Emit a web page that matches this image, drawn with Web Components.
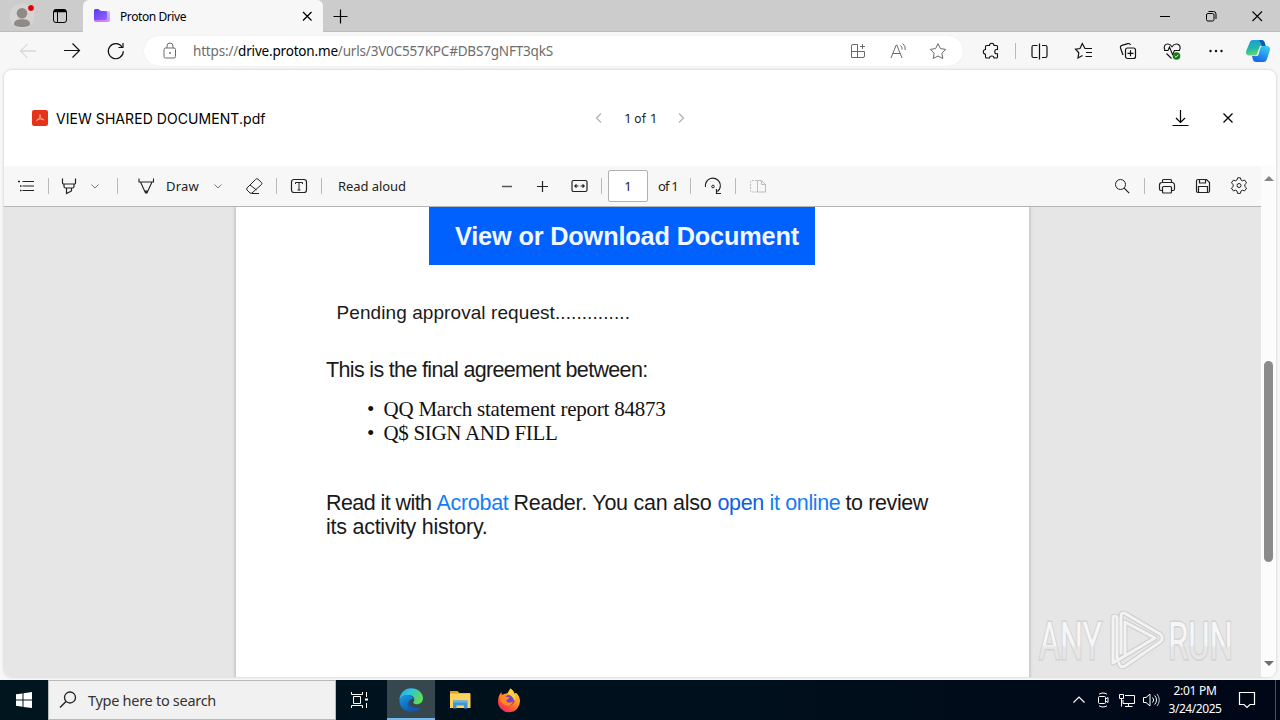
<!DOCTYPE html>
<html lang="en">
<head>
<meta charset="utf-8">
<title>Proton Drive</title>
<style>
  html, body {
    margin: 0;
    height: 100%;
    overflow: hidden;
  }
  body {
    display: flex;
    flex-direction: column;
    width: 1280px;
    height: 720px;
    background: #f7f7f7;
    color: #1b1b1b;
    font-family: "Noto Sans", "Open Sans", sans-serif;
    font-size: 12px;
  }
</style>
</head>
<body>
<tab-strip>Proton Drive</tab-strip>
<nav-bar></nav-bar>
<page-frame>
  <drive-header slot="header">VIEW SHARED DOCUMENT.pdf</drive-header>
  <pdf-toolbar slot="toolbar"></pdf-toolbar>
  <pdf-document></pdf-document>
</page-frame>
<win-taskbar></win-taskbar>

<script>
(function () {
  'use strict';

  // name -> [size, markup]
  const ICONS = {
    avatar: [28, `<g stroke="none"><circle cx="14" cy="14" r="12.500" fill="#d6d3d1"/><circle cx="14" cy="11.300" r="5.300" fill="#8e8a87"/><path d="M6 22c0-3.300 3.500-4.700 8-4.700s8 1.400 8 4.700c0 1.800-3.500 3-8 3s-8-1.200-8-3z" fill="#8e8a87"/></g><circle cx="23" cy="6" r="3.500" fill="#d4000c" stroke="#e7dcdc"/>`],
    workspaces: [20, `<rect x="3.500" y="3.500" width="13" height="13" rx="2.500"/><path d="M4 5h12" stroke-width="2.500"/><path d="M7.500 6v10.500"/>`],
    proton: [18, `<defs><linearGradient id="a" x1="0" y1="0" x2="1" y2="1"><stop offset="0" stop-color="#5b3bee"/><stop offset="1" stop-color="#9463ff"/></linearGradient><linearGradient id="b" x1="0" y1="1" x2="1" y2="0"><stop offset="0" stop-color="#d26bff"/><stop offset="1" stop-color="#c9b4ff"/></linearGradient></defs><g stroke="none"><path d="M1 5a2 2 0 0 1 2-2h3.500l2 1H15a2 2 0 0 1 2 2v7a2 2 0 0 1-2 2H3a2 2 0 0 1-2-2z" fill="url(#b)"/><path d="M1 3.500A1.500 1.500 0 0 1 2.500 2H5.500l2 2H12.500a1.500 1.500 0 0 1 1.500 1.500v5c0 2-1 2.500-3 2.500H1z" fill="url(#a)"/></g>`],
    tabClose: [18, `<path d="M5 5l8.500 8.500M13.500 5L5 13.500" stroke-width="1.300"/>`],
    plus: [16, `<path d="M8.500 1.500v14M1.500 8.500h14" stroke-width="1.200"/>`],
    minimize: [16, `<path d="M3 8.500h10"/>`],
    restore: [16, `<rect x="3.500" y="5.500" width="7.500" height="7.500" rx="1.500"/><path d="M5.500 3.500H10.500a2.500 2.500 0 0 1 2.500 2.500V11"/>`],
    close: [16, `<path d="M3.500 3.500l9.500 9.500M13 3.500L3.500 13" stroke-width="1.100"/>`],
    back: [20, `<path d="M18 10H2.500M9.500 3l-7 7 7 7" stroke="#c9c9c9"/>`],
    forward: [20, `<path d="M2 9.500h15.500M10.500 2.500l7 7-7 7" stroke-width="1.200"/>`],
    refresh: [20, `<path d="M16 6a7.500 7.500 0 1 0 1.300 4.300" stroke-width="1.200"/><path d="M17 2v4.500h-4.500" stroke-width="1.200"/>`],
    lock: [20, `<g stroke="#6a6a6a"><rect x="4" y="7" width="11.500" height="10" rx="1.500"/><path d="M7 7V5a3 3 0 0 1 6 0v2"/><circle cx="10" cy="12" r=".6"/></g>`],
    apps: [20, `<g stroke="#6a6a6a"><path d="M9.500 3.500h-4.500a1.500 1.500 0 0 0-1.500 1.500v11.500h11.500a1.500 1.500 0 0 0 1.500-1.500v-4.500h-13M9.500 3.500v13M14.500 3v5M12 5.500h5"/></g>`],
    read: [20, `<g stroke="#6a6a6a"><path d="M3 17L8.200 4h.6L14 17M4.700 12.500h7.600M12.500 4.500a4 4 0 0 1 1.500 4M14.700 2.500a7 7 0 0 1 2.500 6.500"/></g>`],
    star: [20, `<path d="M10 2.700l2.400 4.900 5.300.8-3.800 3.800.9 5.300-4.800-2.500-4.800 2.500.9-5.300-3.800-3.800 5.300-.8z" stroke="#6a6a6a"/>`],
    puzzle: [20, `<path d="M5.500 4.500h3c0-3 4.500-3 4.500 0h2.500a1 1 0 0 1 1 1v3h-1c-2.300 0-2.300 4.300 0 4.300h1v3.200a1 1 0 0 1-1 1H13c0-2.700-4.500-2.700-4.500 0h-3a1 1 0 0 1-1-1v-2.800c-2.900 0-2.900-4.700 0-4.700v-3a1 1 0 0 1 1-1z" stroke-width="1.100"/>`],
    split: [20, `<path d="M7.500 4.500H3.500a1.500 1.500 0 0 0-1.500 1.500v9a1.500 1.500 0 0 0 1.500 1.500h4M12 4.500h3.500a1.500 1.500 0 0 1 1.500 1.500v9a1.500 1.500 0 0 1-1.500 1.500H12M9.500 2.500v16" stroke-width="1.200"/>`],
    favorites: [20, `<path d="M12.500 7.500h-1.500L8.300 2.500 6 7.500l-4.500.7 3.300 3.600-.8 5.200 4.500-2.500M12.500 7.500h5.500M12 11.500h6M11.500 15.500h6.500" stroke-width="1.200"/>`],
    collections: [20, `<rect x="7.500" y="7" width="10" height="10.500" rx="2" stroke-width="1.200"/><path d="M12.500 9.300v6M9.500 12.300h6M5 14L2.500 7a2 2 0 0 1 1.400-2.600l6-1.800a2 2 0 0 1 2.500 1.400" stroke-width="1.200"/>`],
    heart: [20, `<path d="M3 9C1 5.500 3 3 5.800 3c2.200 0 3.200 1.200 4.200 2.700C11 4.200 12.500 3 14.500 3c3 0 4.600 3 3 6M4.500 12.500l5 5M2 9.500h4l1.500-3.500 3 7.500 2-4h5.500" stroke-width="1.100"/><circle cx="14.500" cy="15" r="3.800" fill="#107c10" stroke="none"/><path d="M12.700 15l1.300 1.300 2.300-2.600" stroke="#d9f2d9"/>`],
    dots: [20, `<g fill="#111" stroke="none"><circle cx="4.500" cy="10" r="1.200"/><circle cx="10" cy="10" r="1.200"/><circle cx="15.500" cy="10" r="1.200"/></g>`],
    copilot: [26, `<defs><linearGradient id="c" x1="0" y1="0" x2=".3" y2="1"><stop offset="0" stop-color="#1696e8"/><stop offset=".6" stop-color="#22b9a7"/><stop offset="1" stop-color="#6ed36e"/></linearGradient><linearGradient id="d" x1=".6" y1="0" x2=".2" y2="1"><stop offset="0" stop-color="#36c6f0"/><stop offset="1" stop-color="#1560e6"/></linearGradient></defs><g stroke="none"><path d="M8 2h8c2.500 0 3.200 1 3.800 3l.7 3H15l-3 8c-.5 1.200-1.200 1.500-2.500 1.500H5c-3.500 0-4.500-2-3.800-4.500L4.500 5C5.200 3 6 2 8 2z" fill="url(#c)"/><path d="M18.500 24h-7c-2.500 0-3.200-1-3.800-3L7 18h4.500c1 0 1.500-.5 2-1.500l2-7c.5-1.200 1.200-1.500 2.500-1.500h3c3.500 0 4.500 2 3.800 4.500L22 21c-.7 2-1.500 3-3.500 3z" fill="url(#d)"/><path d="M14 2h2c2.500 0 3.200 1 3.800 3l.9 3h-3.500z" fill="#1557ae"/></g>`],
    pdf: [16, `<rect width="16" height="16" rx="2" fill="#e4331b" stroke="none"/><path d="M8 4.500c.8 2-.8 4.500-3.800 6.500M8 4.500c-.6 2.500 1.500 5 4 5.500M5 9.800c2-.8 4-1 6.500-.5" stroke="#ffb3a2" stroke-width=".9"/>`],
    prev: [16, `<path d="M10 3.500L5.500 8l4.500 4.500" stroke="#b0b0b0" stroke-width="1.200"/>`],
    next: [16, `<path d="M6 3.500l4.500 4.500L6 12.500" stroke="#b0b0b0" stroke-width="1.200"/>`],
    download: [20, `<path d="M10.500 2v12M6 10l4.500 4.500L15 10M2.500 17.500h16" stroke-width="1.200"/>`],
    x: [16, `<path d="M3.500 3.500l9 9M12.500 3.500l-9 9" stroke-width="1.300"/>`],
    list: [20, `<path d="M6.500 5.500h11.500M6.500 10h11.500M6.500 14.500h11.500"/><path d="M2 5.500h2M4 10h1.500M4 14.500h1.500" stroke-width="1.600"/>`],
    marker: [20, `<path d="M3.500 2.500v4.500a1 1 0 0 0 1 1h11a1 1 0 0 0 1-1V2.500M5 8v2.500a1.500 1.500 0 0 0 1.500 1.500h7a1.500 1.500 0 0 0 1.500-1.500V8M7.500 12v5.500l5-2.500v-3" stroke-width="1.200"/>`],
    down: [12, `<path d="M2.500 4.500l3.500 3.500 3.500-3.500" stroke="#777"/>`],
    pen: [20, `<path d="M3 2.500v3.500h14.500V2.500M4.500 6l5 11h1.500l5-11" stroke-width="1.100"/><path d="M8.700 14.500h3.200l-1 2.500h-1.200z" fill="#222" stroke="none"/>`],
    eraser: [20, `<path d="M11.500 3.500L3 12a1.500 1.500 0 0 0 0 2l3 3a1.500 1.500 0 0 0 2 0l9.500-8.500a1.500 1.500 0 0 0 0-2l-3.500-3.300a1.800 1.800 0 0 0-2.500.3zM6 9l6.500 5M8 17.500h7"/>`],
    textbox: [20, `<rect x="2.500" y="3.500" width="15" height="13" rx="2.500" stroke-width="1.200"/><path d="M6.500 8V6.500h7V8M10 6.500v7.500M8.500 14h3"/>`],
    zoomOut: [16, `<path d="M3 8.500h10" stroke="#555" stroke-width="1.300"/>`],
    zoomIn: [16, `<path d="M8.500 3v11M3 8.500h11" stroke-width="1.200"/>`],
    fit: [20, `<rect x="2" y="4.500" width="15" height="11" rx="1.500" stroke-width="1.200"/><path d="M5 10h3.500M10.500 10H14M6.500 8.300L4.800 10l1.700 1.700M12.500 8.300l1.700 1.700-1.700 1.700" stroke-width="1.200"/>`],
    rotate: [20, `<path d="M2.500 11a7.500 7.500 0 1 1 12 4.500M13.500 13v4.500H18" stroke-width="1.200"/><circle cx="10" cy="10.500" r="1.300"/>`],
    pages: [20, `<g stroke="#bcbcbc"><path d="M9 4.500H4a1.500 1.500 0 0 0-1.500 1.500v8.500A1.500 1.500 0 0 0 4 16h5" stroke-dasharray="2 1"/><path d="M9.500 4.500h4l4 4v7.500h-8zM13.500 4.500v4h4"/></g>`],
    find: [20, `<circle cx="8.500" cy="8.500" r="5"/><path d="M12.200 12.200l5 5" stroke-width="1.200"/>`],
    print: [20, `<path d="M5.500 6.500V4.500a1 1 0 0 1 1-1h7a1 1 0 0 1 1 1v2M5.500 14.500H4a1.500 1.500 0 0 1-1.500-1.500V9a2.500 2.500 0 0 1 2.500-2.500h10.500A2.500 2.500 0 0 1 17.500 9v4a1.500 1.500 0 0 1-1.500 1.500h-1.500" stroke-width="1.200"/><rect x="5.500" y="10.500" width="9" height="6.500" rx="1" stroke-width="1.200"/>`],
    save: [20, `<path d="M5 3.500h8.500l3 3v8.500a1.500 1.500 0 0 1-1.500 1.500H5a1.500 1.500 0 0 1-1.500-1.500V5A1.500 1.500 0 0 1 5 3.500zM6.500 3.500v3.500h6V3.500M5.500 16.500v-6h9v6" stroke-width="1.200"/>`],
    gear: [20, `<path d="M8.600 1.800h2.800l.6 2.200 1.400.8 2.200-.7 2 2.800-1.800 1.600v2l1.800 1.600-2 2.800-2.200-.7-1.400.8-.6 2.400H8.600L8 15l-1.400-.8-2.200.7-2-2.800 1.800-1.600v-2L2.400 6.900l2-2.800 2.200.7L8 4z" stroke-linejoin="round"/><circle cx="10" cy="9.500" r="2"/>`],
    windows: [16, `<path d="M0 2.300L6.500 1.400v6.200H0zM7.500 1.200L16 0v7.600H7.500zM0 8.600h6.500v6.200L0 13.800zM7.500 8.600H16V16l-8.500-1.100z" fill="#fff" stroke="none"/>`],
    taskSearch: [20, `<circle cx="12" cy="7.500" r="5.500" stroke="#222" stroke-width="1.300"/><path d="M8 11.500l-6 6" stroke="#222" stroke-width="1.400"/>`],
    taskview: [20, `<g stroke="#fff"><path d="M1.500 2v2.500h11V2M1.500 18v-2.500h11V18M3.500 6.500h7v7h-7zM16.500 2v5M16.500 13v5"/><path d="M15 9.500h3" stroke-width="2"/></g>`],
    edge: [26, `<defs><linearGradient id="e" x1="0" y1="0" x2="1" y2=".4"><stop offset="0" stop-color="#2aa5ea"/><stop offset=".5" stop-color="#30c6d6"/><stop offset="1" stop-color="#5fdb55"/></linearGradient><linearGradient id="f" x1="0" y1="0" x2=".7" y2="1"><stop offset="0" stop-color="#1c9be5"/><stop offset="1" stop-color="#0c50a4"/></linearGradient></defs><g stroke="none"><path d="M1.500 13A11.500 11.500 0 0 1 13 1.300C20 1.300 25 6 25 11.200c0 3.800-2.800 6-6 6-3 0-4.500-1.200-3.200-2.700 1.700-2.500-.3-6.500-5-6.500C6 8 2.500 10.500 1.500 13z" fill="url(#e)"/><path d="M1.500 13c1-3.500 5-5.500 9-5 3 .4 5 2.500 5.500 4.500-3-1.500-6 1.500-4.500 5 1.500 3.600 6.500 5 11.500 2.500-2.300 3.300-5.800 5-10 5C6.500 25 1.200 20 1.500 13z" fill="url(#f)"/><path d="M10.800 13.500c-3 4.500.2 10 5.800 10.500 2.900-.7 5-2.200 6.400-4-5 2.500-10 1.100-11.500-2.500-.6-1.400-.7-3-.7-4z" fill="#125cae"/></g>`],
    folder: [24, `<g stroke="none"><path d="M2 3h7.500l2 2H22v4H2z" fill="#e5a21d"/><path d="M2 5.500h20.500V20H2z" fill="#ffd45c"/><path d="M5 12.500h14.500V20.500H16v-3H8.500v3H5z" fill="#3f96d6"/><path d="M5 12.500h14.500v2H5z" fill="#66b5e8"/></g>`],
    firefox: [26, `<defs><linearGradient id="g" x1=".9" y1="0" x2=".2" y2="1"><stop offset="0" stop-color="#ffe445"/><stop offset=".4" stop-color="#ff9a20"/><stop offset=".75" stop-color="#ff4b3c"/><stop offset="1" stop-color="#e3227d"/></linearGradient></defs><g stroke="none"><path d="M14.500 1.500c2 1.500 3.300 3 4 5.200l1.500-1c2.500 2.300 4 5 4 8.500A11 11 0 0 1 2 14.500c0-3.800 1-6.500 3.200-9.300l.8 2.500 3-.9c.5-.4 1.500-.7 2.500-.6 1-1.200 1.500-3 3-4.700z" fill="url(#g)"/><circle cx="13.500" cy="13" r="5.200" fill="#7b3fd2"/><path d="M4 9c2.500-1 5-.3 6.200.8 1.500.2 3 .3 3.300 1-1 1.700-3 1.500-3.200 3 1 2.700 4.500 1.500 6.700 1.200-1 3.500-5.500 4.500-9 2.500C5.500 16 4 13 4 9z" fill="#ff8a20"/><path d="M14.500 1.500c2 1.500 3.300 3 4 5.200 1.200 2.200 1.300 5-.5 7.500 0-4-3-5.500-6.500-7.500 1.300-1.500 2-3.300 3-5.200z" fill="#ffd23c"/></g>`],
    trayUp: [16, `<path d="M2.500 10.500L8 5l5.500 5.500" stroke="#fff" stroke-width="1.200"/>`],
    camera: [18, `<g stroke="#fff"><rect x="4.500" y="5.500" width="7" height="7" rx="1"/><path d="M11.500 8l2.500-1.500v5L11.500 10M5 3.200c2.500-1.600 5.500-1.600 8 0M5 14.800c2.500 1.600 5.500 1.600 8 0"/></g>`],
    network: [18, `<g stroke="#fff"><path d="M7 4.500h9.500v8H5V9M10.500 12.500v3M7 15.500h7.500"/><path d="M1.500 3.500h4v4h-4zM3.500 7.500v8"/></g>`],
    volume: [18, `<g stroke="#fff"><path d="M1.500 6.500h2.500l4-3.500v12l-4-3.500H1.500zM10.500 6.500a3.500 3.500 0 0 1 0 5M12.700 4.500a6.500 6.500 0 0 1 0 9"/><path d="M15 3a9 9 0 0 1 0 12" stroke="#c3c6cb"/></g>`],
    notify: [18, `<path d="M1.500 1.500h15v12h-4.500l-3 3-3-3H1.500z" stroke="#fff" stroke-width="1.200"/>`]
  };

  // Registers an element whose shadow root holds the given styles and markup.
  function define(name, css, html) {
    const templ = document.createElement('template');
    templ.innerHTML = `<style>${css}</style>${html}`;
    customElements.define(name, class extends HTMLElement {
      constructor() {
        super();
        this.attachShadow({mode: 'open'}).appendChild(document.importNode(templ.content, true));
      }
    });
  }

  // One icon, centred in a cell that is `w` pixels wide.
  class UiIcon extends HTMLElement {
    constructor() {
      super();
      this.attachShadow({mode: 'open'});
    }

    connectedCallback() {
      const [size, markup] = ICONS[this.getAttribute('name')];
      const w = this.getAttribute('w') || size;
      this.shadowRoot.innerHTML = `
        <style>
          :host { display: flex; flex: none; justify-content: center; align-items: center; width: ${w}px; }
          svg { display: block; flex: none; overflow: visible; }
        </style>
        <svg width="${size}" height="${size}" viewBox="0 0 ${size} ${size}" fill="none" stroke="currentColor">${markup}</svg>`;
    }
  }
  customElements.define('ui-icon', UiIcon);

  // Label that spreads its letters over `w` pixels.
  class FitLabel extends HTMLElement {
    constructor() {
      super();
      this.attachShadow({mode: 'open'}).innerHTML = `
        <style>
          :host { display: block; flex: none; white-space: nowrap; }
          span { display: inline-block; }
        </style>
        <span><slot></slot></span>`;
    }

    connectedCallback() {
      const w = Number(this.getAttribute('w'));
      const span = this.shadowRoot.querySelector('span');
      this.style.width = w + 'px';
      span.style.letterSpacing = (w - span.getBoundingClientRect().width) / this.textContent.length + 'px';
    }
  }
  customElements.define('fit-label', FitLabel);

  define('tool-rule', `
    :host { display: block; flex: none; width: 1px; height: 16px; background: #b9b9b9; }
  `, '');

  define('tab-strip', `
    :host { display: flex; flex: none; height: 32px; background: #ccc; color: #000; box-shadow: inset 0 -1px #bdbdbd; }
    .tab { display: flex; align-items: center; width: 240px; margin-left: 3px; background: #f7f7f7; border-radius: 6px 6px 0 0; box-sizing: border-box; padding-left: 10px; }
    .title { width: 187px; padding-left: 9px; box-sizing: border-box; letter-spacing: -.42px; font-size: 12px; white-space: nowrap; }
    .drag { flex: 1; }
  `, `
    <ui-icon name="avatar" w="44"></ui-icon>
    <ui-icon name="workspaces" w="32"></ui-icon>
    <span style="width:4px"></span>
    <div class="tab">
      <ui-icon name="proton" w="18"></ui-icon>
      <div class="title"><slot></slot></div>
      <ui-icon name="tabClose" w="18"></ui-icon>
    </div>
    <ui-icon name="plus" w="34"></ui-icon>
    <div class="drag"></div>
    <ui-icon name="minimize" w="46"></ui-icon>
    <ui-icon name="restore" w="46"></ui-icon>
    <ui-icon name="close" w="46"></ui-icon>
  `);

  define('nav-bar', `
    :host { display: flex; flex: none; align-items: center; height: 38px; padding-left: 6px; background: #f7f7f7; color: #111; }
    .address { display: flex; align-items: center; width: 819px; height: 30px; margin: 0 6px; padding: 0 5px 0 3px; box-sizing: border-box; background: #fff; border-radius: 15px; box-shadow: 0 0 1px #ddd; }
    .url { flex: 1; font-size: 13.5px; color: #6d6d6d; }
    b { font-weight: 400; color: #000; }
  `, `
    <ui-icon name="back" w="44"></ui-icon>
    <ui-icon name="forward" w="44"></ui-icon>
    <ui-icon name="refresh" w="44"></ui-icon>
    <div class="address">
      <ui-icon name="lock" w="46"></ui-icon>
      <div class="url"><fit-label w="360">https://<b>drive.proton.me</b>/urls/3V0C557KPC#DBS7gNFT3qkS</fit-label></div>
      <ui-icon name="apps" w="40"></ui-icon>
      <ui-icon name="read" w="40"></ui-icon>
      <ui-icon name="star" w="40"></ui-icon>
    </div>
    <ui-icon name="puzzle" w="44"></ui-icon>
    <tool-rule style="margin:0 2px"></tool-rule>
    <ui-icon name="split" w="44"></ui-icon>
    <ui-icon name="favorites" w="44"></ui-icon>
    <ui-icon name="collections" w="44"></ui-icon>
    <ui-icon name="heart" w="44"></ui-icon>
    <ui-icon name="dots" w="44"></ui-icon>
    <ui-icon name="copilot" w="40"></ui-icon>
  `);

  define('page-frame', `
    :host { display: flex; flex-direction: column; flex: none; height: 607px; margin: 0 4px 3px; overflow: hidden; background: #fff; border-radius: 8px; box-shadow: 0 0 2px 1px #dedede; }
    .body { display: flex; flex: 1; min-height: 0; }
    .viewer { display: flex; flex-direction: column; width: 1257px; }
    .scroll { display: flex; flex-direction: column; align-items: center; width: 15px; background: #fcfcfc; box-sizing: border-box; padding: 10px 0 11px; }
    .scroll i { border: 5px solid transparent; border-top: 0; border-bottom: 5px solid #858585; }
    .scroll i:last-child { border-bottom: 0; border-top: 5px solid #6f6f6f; margin-top: auto; }
    .thumb { width: 9px; height: 201px; margin-top: 180px; border-radius: 5px; background: #8b8b8b; }
  `, `
    <slot name="header"></slot>
    <div class="body">
      <div class="viewer"><slot name="toolbar"></slot><slot></slot></div>
      <div class="scroll"><i></i><div class="thumb"></div><i></i></div>
    </div>
  `);

  define('drive-header', `
    :host { display: flex; flex: none; align-items: center; height: 96px; box-sizing: border-box; padding-left: 28px; color: #000; font-family: Inter, sans-serif; font-size: 14px; }
    .name { width: 530px; padding-left: 8px; letter-spacing: .06px; box-sizing: border-box; white-space: nowrap; }
    .pager { display: flex; align-items: center; width: 550px; font-size: 12px; color: #222; }
    fit-label { margin: 0 17px 0 17px; }
  `, `
    <ui-icon name="pdf" w="16"></ui-icon>
    <div class="name"><slot></slot></div>
    <div class="pager">
      <span style="width:12px"></span>
      <ui-icon name="prev" w="18"></ui-icon>
      <fit-label w="31">1 of 1</fit-label>
      <ui-icon name="next" w="16"></ui-icon>
    </div>
    <span style="width:28px"></span>
    <ui-icon name="download" w="48"></ui-icon>
    <ui-icon name="x" w="48"></ui-icon>
  `);

  define('pdf-toolbar', `
    :host { display: flex; flex: none; align-items: center; height: 41px; box-sizing: border-box; border-bottom: 1px solid #b4b4b4; background: #f7f7f7; color: #222; font-size: 13px; }
    .group { display: flex; align-items: center; }
    .left { width: 485px; }
    .middle { width: 615px; }
    .page { display: flex; justify-content: center; align-items: center; width: 40px; height: 32px; margin: 0 10px 0 6px; box-sizing: border-box; border: 1px solid #b5b0b0; border-radius: 2px; background: #fff; }
  `, `
    <div class="group left">
      <ui-icon name="list" w="44"></ui-icon>
      <tool-rule></tool-rule>
      <ui-icon name="marker" w="40"></ui-icon>
      <ui-icon name="down" w="12"></ui-icon>
      <tool-rule style="margin-left:16px"></tool-rule>
      <span style="width:14px"></span>
      <ui-icon name="pen" w="28"></ui-icon>
      <fit-label w="33" style="margin:0 13px 0 6px">Draw</fit-label>
      <ui-icon name="down" w="12"></ui-icon>
      <span style="width:16px"></span>
      <ui-icon name="eraser" w="28"></ui-icon>
      <tool-rule style="margin-left:8px"></tool-rule>
      <ui-icon name="textbox" w="44"></ui-icon>
      <tool-rule></tool-rule>
      <fit-label w="68" style="margin-left:16px">Read aloud</fit-label>
    </div>
    <div class="group middle">
      <ui-icon name="zoomOut" w="36"></ui-icon>
      <ui-icon name="zoomIn" w="34"></ui-icon>
      <ui-icon name="fit" w="41"></ui-icon>
      <tool-rule style="margin-left:1px"></tool-rule>
      <div class="page">1</div>
      <fit-label w="20">of 1</fit-label>
      <tool-rule style="margin-left:12px"></tool-rule>
      <ui-icon name="rotate" w="44"></ui-icon>
      <tool-rule></tool-rule>
      <ui-icon name="pages" w="44"></ui-icon>
    </div>
    <div class="group">
      <ui-icon name="find" w="36"></ui-icon>
      <tool-rule style="margin:0 3px 0 4px"></tool-rule>
      <ui-icon name="print" w="38"></ui-icon>
      <ui-icon name="save" w="34"></ui-icon>
      <ui-icon name="gear" w="38"></ui-icon>
    </div>
  `);

  define('pdf-document', `
    :host { display: block; position: relative; flex: 1; overflow: hidden; background: #e6e6e6; color: #1a1a1a; font: 21.5px/24px "Liberation Sans", Arial, sans-serif; }
    .page { width: 793px; height: 520px; margin-left: 232px; box-sizing: border-box; padding-left: 90px; background: #fff; box-shadow: 0 0 3px 1px #bcbcbc; }
    .button { display: flex; align-items: center; width: 386px; height: 58px; margin-left: 103px; padding: 0 0 1px 26px; box-sizing: border-box; background: #0061ff; color: #f2f7ff; font-weight: bold; font-size: 25.3px; }
    .pending { margin: 36px 0 0 10.500px; font-size: 19px; }
    .intro { margin-top: 33px; }
    ul { margin: 15px 0 46px; padding: 0 0 0 41px; list-style: none; color: #111; font-family: "Liberation Serif", "Times New Roman", serif; font-size: 21px; }
    li { display: flex; }
    li::before { content: "•"; width: 16.500px; }
    a { color: #147df5; }
    a.dark { color: #0b62dc; }
    .read { display: flex; white-space: pre; }
    svg { position: absolute; left: 1032px; top: 400px; overflow: visible; font-family: "Roboto", sans-serif; }
  `, `
    <div class="page">
      <div class="button"><fit-label w="344">View or Download Document</fit-label></div>
      <fit-label class="pending" w="293.500">Pending approval request..............</fit-label>
      <fit-label class="intro" w="321.500">This is the final agreement between:</fit-label>
      <ul>
        <li><fit-label w="282">QQ March statement report 84873</fit-label></li>
        <li><fit-label w="174">Q$ SIGN AND FILL</fit-label></li>
      </ul>
      <div class="read"><fit-label w="105.500">Read it with</fit-label><fit-label w="72" style="margin:0 5px"><a>Acrobat</a></fit-label><fit-label w="198">Reader. You can also</fit-label><fit-label w="123" style="margin:0 5px 0 6px"><a class="dark">open</a> <a>it online</a></fit-label><fit-label w="82.500">to review</fit-label></div>
      <fit-label w="161.500">its activity history.</fit-label>
    </div>
    <svg width="204" height="70" viewBox="0 0 204 70" fill="none">
      <defs>
        <linearGradient id="fade" x1="0" y1="0" x2="0" y2="1">
          <stop offset=".55" stop-color="#f6f6f6"/>
          <stop offset=".6" stop-color="#e6e6e6"/>
        </linearGradient>
      </defs>
      <g stroke="#d3d3d3" stroke-width="3" fill="url(#fade)" font-size="52" paint-order="stroke">
        <text transform="translate(3 52) scale(.62 1)">ANY</text>
        <text transform="translate(132 52) scale(.63 1)">RUN</text>
      </g>
      <g stroke-linejoin="round" stroke-linecap="round">
        <path d="M77 56V11c0-3 4-2 4 0v41M85 46V9c0-3 2-4 5-2l34 20c3 2 3 6 0 8L89 59c-3 2-6 0-6-3M89 47V15l30 16-42 25" stroke="#cdcdcd" stroke-width="5"/>
        <path d="M77 56V11c0-3 4-2 4 0v41M85 46V9c0-3 2-4 5-2l34 20c3 2 3 6 0 8L89 59c-3 2-6 0-6-3M89 47V15l30 16-42 25" stroke="#f3f3f3" stroke-width="3"/>
      </g>
    </svg>
  `);

  define('win-taskbar', `
    :host { display: flex; flex: none; height: 40px; background: linear-gradient(90deg, #00151e, #000f1c 60%, #000717); color: #fff; }
    .search { display: flex; align-items: center; width: 288px; box-sizing: border-box; border: 1px solid #b9b9b9; background: #f1f1f1; color: #333; font-size: 14.5px; }
    .search fit-label { margin-left: 2px; }
    .active { display: flex; width: 48px; background: #37474e; box-shadow: inset 0 -2px #76b9ed; }
    .fill { flex: 1; }
    .clock { display: flex; flex-direction: column; align-items: center; justify-content: center; width: 60px; font-size: 12px; line-height: 18px; }
    .show { width: 4px; border-left: 1px solid #4a515c; }
  `, `
    <ui-icon name="windows" w="48"></ui-icon>
    <div class="search">
      <ui-icon name="taskSearch" w="37"></ui-icon>
      <fit-label w="128">Type here to search</fit-label>
    </div>
    <ui-icon name="taskview" w="48"></ui-icon>
    <span style="width:3px"></span>
    <div class="active"><ui-icon name="edge" w="48"></ui-icon></div>
    <ui-icon name="folder" w="49"></ui-icon>
    <ui-icon name="firefox" w="49"></ui-icon>
    <div class="fill"></div>
    <ui-icon name="trayUp" w="24"></ui-icon>
    <ui-icon name="camera" w="24"></ui-icon>
    <ui-icon name="network" w="24"></ui-icon>
    <ui-icon name="volume" w="24"></ui-icon>
    <span style="width:2px"></span>
    <div class="clock"><fit-label w="43">2:01 PM</fit-label><fit-label w="53">3/24/2025</fit-label></div>
    <ui-icon name="notify" w="44"></ui-icon>
    <span style="width:6px"></span>
    <div class="show"></div>
  `);
})();
</script>
</body>
</html>
